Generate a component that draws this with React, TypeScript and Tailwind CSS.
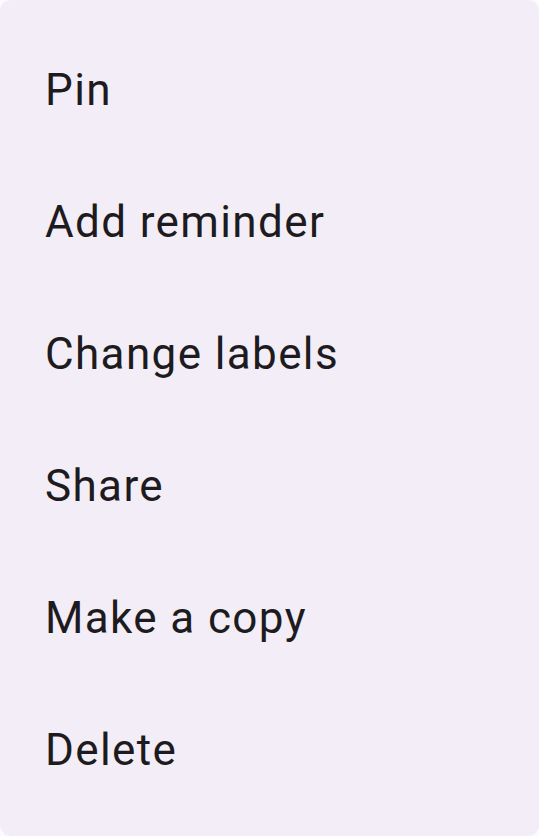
import React from "react";

const items = ["Pin", "Add reminder", "Change labels", "Share", "Make a copy", "Delete"];

export default function App() {
  return (
    <div className="w-[539px] h-[836px] bg-[#fbfafc]">
      <div
        className="w-[539px] h-[836px] bg-[#f3edf7] rounded-[11px] pt-[24px] pb-[20px] flex flex-col"
        style={{ fontFamily: "Roboto, 'Liberation Sans', sans-serif" }}
      >
        {items.map((t) => (
          <div
            key={t}
            className="h-[132px] flex items-center pl-[45px] text-[44px] leading-[66px] tracking-[1.375px] text-[#1d1b20]"
          >
            {t}
          </div>
        ))}
      </div>
    </div>
  );
}
